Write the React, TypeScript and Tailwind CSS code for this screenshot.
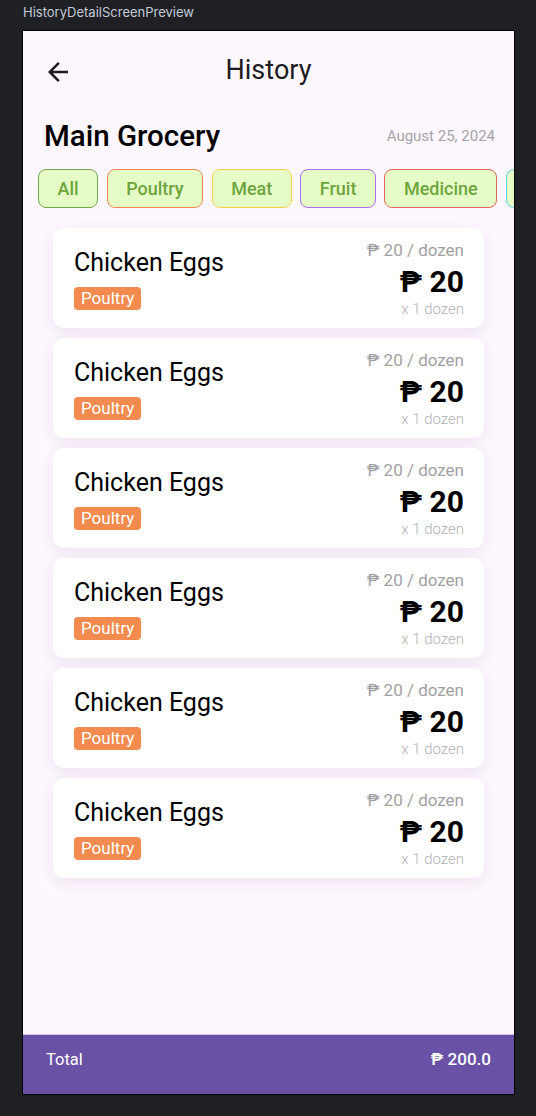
import React from "react";

const chips = [
  { label: "All", border: "border-[#6fa94c]" },
  { label: "Poultry", border: "border-[#f0894d]" },
  { label: "Meat", border: "border-[#f2d24f]" },
  { label: "Fruit", border: "border-[#a96ff0]" },
  { label: "Medicine", border: "border-[#e0675b]" },
  { label: "Vegetable", border: "border-[#5fd3e6]" },
];

const items = Array.from({ length: 6 }, (_, i) => ({
  id: i,
  name: "Chicken Eggs",
  category: "Poultry",
  unitPrice: "₱ 20 / dozen",
  total: "₱ 20",
  qty: "x 1 dozen",
}));

function BackArrow() {
  return (
    <svg width="30" height="30" viewBox="0 0 24 24" fill="#1d1b20">
      <path d="M20 11H7.83l5.59-5.59L12 4l-8 8 8 8 1.41-1.41L7.83 13H20v-2z" />
    </svg>
  );
}

export default function App() {
  return (
    <div className="h-[1116px] w-[536px] bg-[#1f2023] overflow-hidden">
      {/* preview label */}
      <div className="h-[30px] pl-[23px] pt-[4px] font-['Inter',sans-serif] text-[13px] leading-[16px] text-[#c3cad8]">
        HistoryDetailScreenPreview
      </div>

      {/* device frame */}
      <div className="ml-[22px] w-[493px] h-[1065px] border border-black bg-[#fef7ff] flex flex-col font-['Roboto',sans-serif] overflow-hidden">
        {/* top bar */}
        <div className="h-[78px] grid grid-cols-[1fr_auto_1fr] items-center">
          <div className="pl-[20px] pt-[4px]">
            <BackArrow />
          </div>
          <div className="text-[27px] leading-[34px] text-[#1d1b20]">History</div>
          <div />
        </div>

        {/* title row */}
        <div className="mt-[9px] h-[36px] pl-[21px] pr-[19px] flex items-center justify-between">
          <span className="text-[29.5px] leading-[36px] font-medium text-black">Main Grocery</span>
          <span className="text-[15px] leading-[20px] text-[#a5a3a8]">August 25, 2024</span>
        </div>

        {/* category chips */}
        <div className="mt-[15px] pl-[15px] flex gap-[8.5px] overflow-hidden">
          {chips.map((c) => (
            <div
              key={c.label}
              className={`h-[39px] shrink-0 px-[18.5px] flex items-center rounded-[8px] border-[1.5px] bg-[#e6fcc6] text-[18px] font-medium text-[#6ea53f] ${c.border}`}
            >
              {c.label}
            </div>
          ))}
        </div>

        {/* item list */}
        <div className="mt-[20px] mx-[30px] flex flex-col gap-[10px]">
          {items.map((item) => (
            <div
              key={item.id}
              className="h-[100px] bg-white rounded-[11px] shadow-[0_5px_16px_rgba(70,30,80,0.09)] pl-[21px] pr-[20px] flex items-center justify-between"
            >
              <div className="flex flex-col items-start pt-[2px]">
                <span className="text-[25px] leading-[28px] text-black">{item.name}</span>
                <span className="mt-[10px] h-[23px] px-[7px] rounded-[4px] bg-[#f38b4e] text-white text-[17px] leading-[23px]">
                  {item.category}
                </span>
              </div>
              <div className="flex flex-col items-end">
                <span className="text-[17px] leading-[20px] text-[#a2a0a4]">{item.unitPrice}</span>
                <span className="mt-[5px] text-[30px] leading-[34px] font-bold text-black">{item.total}</span>
                <span className="mt-[2px] text-[15px] leading-[16px] font-light text-[#b3b1b5]">{item.qty}</span>
              </div>
            </div>
          ))}
        </div>

        <div className="flex-1" />

        {/* total bar */}
        <div className="h-[60px] border-t border-[#cdbfe2] bg-[#6951a5] px-[23px] pb-[9px] flex items-center justify-between text-white text-[16.5px]">
          <span>Total</span>
          <span className="font-medium text-[17px]">₱ 200.0</span>
        </div>
      </div>
    </div>
  );
}
